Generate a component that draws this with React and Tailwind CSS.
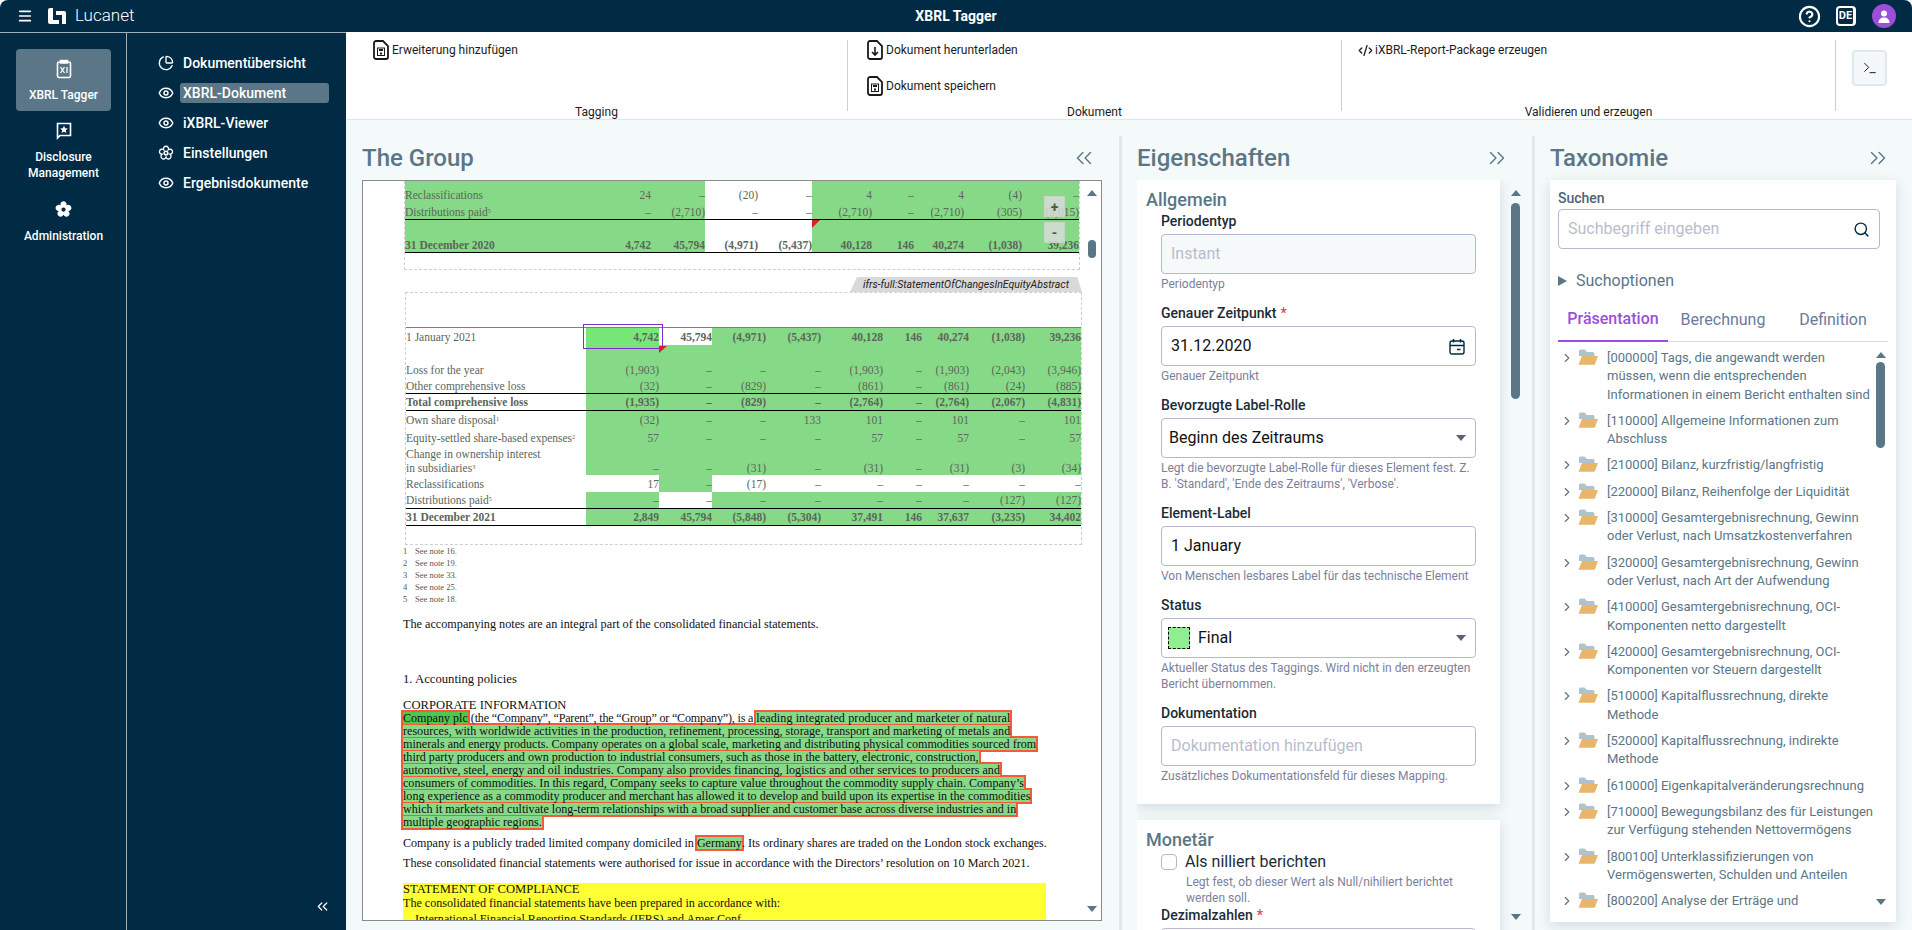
import React from 'react';
import { Menu, CircleHelp, Eye, ChevronsLeft, ChevronsRight, ChevronRight, Search, Terminal, CodeXml, ChartPie } from 'lucide-react';

const T1 = 'grid grid-cols-[190px_56px_54px_53px_54px_60px_42px_50px_58px_57px]';
const T2 = 'grid grid-cols-[180px_73px_53px_54px_55px_62px_39px_47px_56px_56px]';

const flower = 'M5.3 4.28A2.9 2.9 0 1 1 10.7 4.28A2.9 2.9 0 1 1 12.37 9.42A2.9 2.9 0 1 1 8 12.6A2.9 2.9 0 1 1 3.63 9.42A2.9 2.9 0 1 1 5.3 4.28Z';

const tree = [
  '[000000] Tags, die angewandt werden\nmüssen, wenn die entsprechenden\nInformationen in einem Bericht enthalten sind',
  '[110000] Allgemeine Informationen zum\nAbschluss',
  '[210000] Bilanz, kurzfristig/langfristig',
  '[220000] Bilanz, Reihenfolge der Liquidität',
  '[310000] Gesamtergebnisrechnung, Gewinn\noder Verlust, nach Umsatzkostenverfahren',
  '[320000] Gesamtergebnisrechnung, Gewinn\noder Verlust, nach Art der Aufwendung',
  '[410000] Gesamtergebnisrechnung, OCI-\nKomponenten netto dargestellt',
  '[420000] Gesamtergebnisrechnung, OCI-\nKomponenten vor Steuern dargestellt',
  '[510000] Kapitalflussrechnung, direkte\nMethode',
  '[520000] Kapitalflussrechnung, indirekte\nMethode',
  '[610000] Eigenkapitalveränderungsrechnung',
  '[710000] Bewegungsbilanz des für Leistungen\nzur Verfügung stehenden Nettovermögens',
  '[800100] Unterklassifizierungen von\nVermögenswerten, Schulden und Anteilen',
  '[800200] Analyse der Erträge und\nAufwendungen',
];

function Tri({ down, className = '' }) {
  return (
    <svg width="10" height="6" viewBox="0 0 10 6" className={className}>
      <path d={down ? 'M0 0h10L5 6z' : 'M5 0l5 6H0z'} fill="currentColor" />
    </svg>
  );
}

function FileBase({ children }) {
  return (
    <svg width="16" height="20" viewBox="0 0 16 20" fill="none" className="shrink-0">
      <path d="M3 1h7l5 5v11a2 2 0 0 1-2 2H3a2 2 0 0 1-2-2V3a2 2 0 0 1 2-2z" stroke="#1a1a1a" strokeWidth="1.8" />
      {children}
    </svg>
  );
}

function SaveFile() {
  return (
    <FileBase>
      <rect x="4.5" y="8" width="7" height="7.5" stroke="#1a1a1a" strokeWidth="1" />
      <rect x="6" y="9" width="4" height="2" fill="#1a1a1a" />
      <rect x="7" y="12.5" width="2" height="2" fill="#1a1a1a" />
    </FileBase>
  );
}

function DownloadFile() {
  return (
    <FileBase>
      <path d="M8 7v8M5 12l3 3 3-3" stroke="#1a1a1a" strokeWidth="1.6" />
    </FileBase>
  );
}

function Folder() {
  return (
    <svg width="20" height="16" viewBox="0 0 20 16" className="shrink-0">
      <path d="M1 2a1.500 1.500 0 0 1 1.500-1.500h4L9 3h6a1.500 1.500 0 0 1 1.500 1.500V7H1z" fill="#afc3cf" />
      <path d="M4 7h16l-3 8a1 1 0 0 1-1 .7H0.500z" fill="#e9b568" />
    </svg>
  );
}

function NavIcon({ kind }) {
  if (kind === 'pie') return <ChartPie size={16} strokeWidth={2} className="text-white" />;
  if (kind === 'eye') return <Eye size={16} strokeWidth={2.2} className="text-white" />;
  return (
    <svg width="16" height="16" viewBox="0 0 16 16" fill="none" stroke="white" strokeWidth="1.500">
      <path d={flower} transform="translate(8 8) scale(0.88) translate(-8 -8)" />
      <circle cx="8" cy="8" r="1.800" />
    </svg>
  );
}

function RailItem({ active, icon, children }) {
  return (
    <div className={`mx-4 w-[95px] flex flex-col items-center pt-[10px] pb-2 rounded ${active ? 'bg-[#5b7687]' : ''}`}>
      <div className="h-5 flex items-center justify-center">{icon}</div>
      <div className="mt-2 text-center text-xs leading-4 font-medium text-white">{children}</div>
    </div>
  );
}

function ToolItem({ icon, children }) {
  return (
    <div className="flex items-center h-5 gap-[3px] text-xs text-[#1c1c1c]">
      {icon}
      <span>{children}</span>
    </div>
  );
}

function Row({ grid, label, sup, vals, h, white = [], bold, boldLabel, light, labelGreen, end }) {
  return (
    <div className={`${grid} ${h} text-[11.5px] leading-[14px] text-[#5c665c]`}>
      <div className={`flex whitespace-pre-line overflow-hidden ${end ? 'items-end' : 'items-center'} ${labelGreen ? 'bg-[#86d986]' : ''} ${boldLabel ? 'font-bold' : ''}`}>
        <span>{label}{sup && <sup className="text-[6px]">{sup}</sup>}</span>
      </div>
      {(vals || Array(9).fill('')).map((v, i) => (
        <div
          key={i}
          className={`flex justify-end ${bold ? 'font-bold' : ''} ${end ? 'items-end' : 'items-center'} ${white.includes(i) ? '' : light === i ? 'bg-[#77e878]' : 'bg-[#86d986]'}`}
        >
          {v}
        </div>
      ))}
    </div>
  );
}

function Hl({ strong, children, className = '' }) {
  return (
    <span className={`relative inline-block ${className}`}>
      <span className="absolute -inset-[2px] bg-[#f4593a] z-[-2]" />
      <span className="absolute inset-0 bg-white z-[-1]" />
      <span className={`block h-[12px] leading-[12px] ${strong ? 'bg-[#4cc94c]' : 'bg-[#86d986]'}`}>{children}</span>
    </span>
  );
}

function Help({ children }) {
  return <div className="mt-[2px] text-xs leading-4 text-[#7c7f9c]">{children}</div>;
}

function Label({ req, children }) {
  return (
    <div className="h-5 leading-5 text-sm font-medium text-[#1d2b36]">
      {children}
      {req && <span className="ml-1 text-[#e0445a]">*</span>}
    </div>
  );
}

function Field({ label, req, help, children, bg = 'bg-white' }) {
  return (
    <div className="mb-[11px]">
      <Label req={req}>{label}</Label>
      <div className={`mt-[3px] h-10 rounded border border-[#b5b9cc] ${bg} flex items-center justify-between text-base`}>
        {children}
      </div>
      <Help>{help}</Help>
    </div>
  );
}

function ScrollCol({ className, thumb }) {
  return (
    <div className={`flex flex-col items-center text-[#5b7687] ${className}`}>
      <Tri className="shrink-0" />
      {thumb}
      <div className="mt-auto">
        <Tri down />
      </div>
    </div>
  );
}

export default function App() {
  return (
    <div className="w-[1912px] h-[930px] overflow-hidden flex flex-col bg-[#f4f9fa] font-['Roboto',sans-serif]">
      {/* Header */}
      <header className="h-8 shrink-0 bg-[#012b44] rounded-t-lg flex items-center relative text-white">
        <Menu size={16} strokeWidth={2.500} className="ml-[17px]" />
        <svg width="18" height="16" viewBox="0 0 18 16" className="ml-[15px]">
          <path d="M0 2a2 2 0 0 1 2-2h3v12h6v4H2a2 2 0 0 1-2-2z" fill="white" />
          <path d="M8 3h8a2 2 0 0 1 2 2v11h-4V7H8z" fill="white" />
        </svg>
        <span className="ml-[9px] text-[17px] font-light">Lucanet</span>
        <span className="absolute left-[912px] w-[88px] text-center text-sm font-bold">XBRL Tagger</span>
        <div className="ml-auto flex items-center mr-4">
          <CircleHelp size={23} strokeWidth={2.200} />
          <div className="ml-[15px] w-5 h-5 border-2 border-r-[3px] border-white rounded-sm text-[11px] font-bold flex items-center justify-center">DE</div>
          <div className="ml-4 w-6 h-6 rounded-full bg-[#9b4fd8] flex items-center justify-center">
            <svg width="12" height="13" viewBox="0 0 12 13" fill="white">
              <circle cx="6" cy="3.500" r="3" />
              <path d="M0.500 13c0-3.500 2.200-5.500 5.500-5.500s5.500 2 5.500 5.500z" />
            </svg>
          </div>
        </div>
      </header>

      <div className="flex flex-1 min-h-0">
        {/* Rail */}
        <aside className="w-[127px] shrink-0 bg-[#012b44] border-t border-r border-[#9fb1bd] pt-4">
          <RailItem
            active
            icon={
              <svg width="16" height="20" viewBox="0 0 16 20" fill="none" stroke="white" strokeWidth="1.600">
                <rect x="1.500" y="3" width="13" height="15.500" rx="1.500" />
                <path d="M4.500 1.500h7V4h-7z" fill="white" />
                <path d="M4.500 8l4 6M8.500 8l-4 6M11 8v6" strokeWidth="1.300" />
              </svg>
            }
          >
            XBRL Tagger
          </RailItem>
          <RailItem
            icon={
              <svg width="16" height="18" viewBox="0 0 16 18" fill="none" stroke="white" strokeWidth="1.600">
                <path d="M1.500 1.500h13v12H4l-2.500 2.500z" />
                <path d="M8 3.800l1.200 2.400 2.600.3-1.900 1.800.5 2.600L8 9.700l-2.400 1.200.5-2.600-1.900-1.800 2.600-.3z" fill="white" stroke="none" />
              </svg>
            }
          >
            Disclosure
            <br />
            Management
          </RailItem>
          <RailItem
            icon={
              <svg width="17" height="17" viewBox="0 0 16 16" fill="white" fillRule="evenodd">
                <path d={`${flower}M8 6a2 2 0 1 0 0 4 2 2 0 0 0 0-4z`} />
              </svg>
            }
          >
            <span className="block pt-px">Administration</span>
          </RailItem>
        </aside>

        {/* Second nav */}
        <nav className="w-[219px] shrink-0 bg-[#012b44] border-t border-[#9fb1bd] pt-[15px] flex flex-col text-white text-sm font-medium">
          {[
            ['pie', 'Dokumentübersicht'],
            ['eye', 'XBRL-Dokument', true],
            ['eye', 'iXBRL-Viewer'],
            ['gear', 'Einstellungen'],
            ['eye', 'Ergebnisdokumente'],
          ].map(([kind, text, active]) => (
            <div key={text} className="h-[30px] flex items-center pl-[31px]">
              <NavIcon kind={kind} />
              <span className={`ml-[6px] w-[149px] h-5 leading-5 pl-[3px] rounded-[3px] ${active ? 'bg-[#5b7687]' : ''}`}>{text}</span>
            </div>
          ))}
          <div className="mt-auto mb-[15px] ml-[187px]">
            <ChevronsLeft size={17} strokeWidth={1.700} />
          </div>
        </nav>

        {/* Main */}
        <main className="flex-1 min-w-0 flex flex-col">
          <div className="h-[88px] shrink-0 bg-white border-b border-[#dde6ea] flex">
            <div className="w-[501px] flex flex-col pt-2 pl-[27px]">
              <ToolItem icon={<SaveFile />}>Erweiterung hinzufügen</ToolItem>
              <div className="mt-auto -mb-px -ml-[27px] h-[15px] leading-[15px] text-center text-xs text-[#1c1c1c]">Tagging</div>
            </div>
            <div className="w-px h-[71px] mt-2 bg-[#c9cfd3]" />
            <div className="w-[493px] flex flex-col pt-2 pl-[19px]">
              <ToolItem icon={<DownloadFile />}>Dokument herunterladen</ToolItem>
              <div className="mt-4">
                <ToolItem icon={<SaveFile />}>Dokument speichern</ToolItem>
              </div>
              <div className="mt-auto -mb-px -ml-[19px] h-[15px] leading-[15px] text-center text-xs text-[#1c1c1c]">Dokument</div>
            </div>
            <div className="w-px h-[71px] mt-2 bg-[#c9cfd3]" />
            <div className="w-[493px] flex flex-col pt-2 pl-4">
              <div className="flex items-center h-5 gap-[2px] text-xs text-[#1c1c1c]">
                <CodeXml size={15} strokeWidth={2} />
                <span>iXBRL-Report-Package erzeugen</span>
              </div>
              <div className="mt-auto -mb-px -ml-4 h-[15px] leading-[15px] text-center text-xs text-[#1c1c1c]">Validieren und erzeugen</div>
            </div>
            <div className="w-px h-[71px] mt-2 bg-[#c9cfd3]" />
            <div className="ml-4 mt-[18px] w-[35px] h-9 rounded border-2 border-[#dfe8ec] bg-[#f5f8fa] flex items-center justify-center">
              <Terminal size={16} strokeWidth={1.500} className="text-[#1c1c1c]" />
            </div>
          </div>

          <div className="flex-1 min-h-0 flex bg-[#f4f9fa]">
            {/* Document pane */}
            <section className="w-[773px] shrink-0 pt-4 pl-4 flex flex-col">
              <div className="h-11 w-[740px] flex items-center justify-between pr-[5px]">
                <h2 className="text-2xl font-medium text-[#5b7687]">The Group</h2>
                <ChevronsLeft size={26} strokeWidth={1.300} className="text-[#5b7687]" />
              </div>
              <div className="w-[740px] h-[741px] bg-white border border-[#8a8a8a] flex overflow-hidden">
                <div className="w-[720px] shrink-0 overflow-hidden pl-10 font-['Liberation_Serif',serif] isolate">
                  {/* first table */}
                  <div className="relative ml-px w-[676px] border-x border-b border-dashed border-[#cfcfcf] h-[89px]">
                    <Row grid={T1} labelGreen white={[2, 3]} h="h-[21px]" end label="Reclassifications" vals={['24', '–', '(20)', '–', '4', '–', '4', '(4)', '–']} />
                    <Row grid={T1} labelGreen end white={[2, 3]} h="h-[17px]" label="Distributions paid" sup="5" vals={['–', '(2,710)', '–', '–', '(2,710)', '–', '(2,710)', '(305)', '(3,015)']} />
                    <div className="h-px bg-black" />
                    <Row grid={T1} labelGreen bold boldLabel white={[2, 3]} h="h-8" end label="31 December 2020" vals={['4,742', '45,794', '(4,971)', '(5,437)', '40,128', '146', '40,274', '(1,038)', '39,236']} />
                    <div className="h-px bg-black" />
                    <div className="absolute left-[407px] top-[39px] w-2 h-2 bg-[#e0193c] [clip-path:polygon(0_0,100%_0,0_100%)]" />
                    <div className="absolute left-[639px] top-[15px] w-[21px] h-[21px] bg-[#dcdcdc]/80 border border-[#c9d4c9] flex items-center justify-center font-['Roboto',sans-serif] font-bold text-sm text-[#555]">+</div>
                    <div className="absolute left-[639px] top-[41px] w-[21px] h-[21px] bg-[#dcdcdc]/80 border border-[#c9d4c9] flex items-center justify-center font-['Roboto',sans-serif] font-bold text-sm text-[#555]">-</div>
                  </div>

                  {/* tag label */}
                  <div className="mt-[7px] w-[679px] flex justify-end">
                    <div className="w-[232px] h-[15px] bg-[#d9d9d9] [clip-path:polygon(3%_0,98%_0,100%_100%,0_100%)] flex items-center justify-center font-['Roboto',sans-serif] italic text-[10.5px] text-[#222]">
                      ifrs-full:StatementOfChangesInEquityAbstract
                    </div>
                  </div>

                  {/* second table */}
                  <div className="relative ml-[2px] w-[677px] h-[253px] border border-dashed border-[#cfcfcf] pt-[34px]">
                    <div className="h-px bg-[#2aa3a8]" />
                    <Row grid={T2} bold light={0} white={[1]} h="h-[17px]" label="1 January 2021" vals={['4,742', '45,794', '(4,971)', '(5,437)', '40,128', '146', '40,274', '(1,038)', '39,236']} />
                    <Row grid={T2} h="h-[17px]" label="" />
                    <Row grid={T2} h="h-4" label="Loss for the year" vals={['(1,903)', '–', '–', '–', '(1,903)', '–', '(1,903)', '(2,043)', '(3,946)']} />
                    <Row grid={T2} h="h-[15px]" label="Other comprehensive loss" vals={['(32)', '–', '(829)', '–', '(861)', '–', '(861)', '(24)', '(885)']} />
                    <div className="h-px bg-black" />
                    <Row grid={T2} bold boldLabel h="h-4" label="Total comprehensive loss" vals={['(1,935)', '–', '(829)', '–', '(2,764)', '–', '(2,764)', '(2,067)', '(4,831)']} />
                    <div className="h-px bg-black" />
                    <Row grid={T2} h="h-[18px]" label="Own share disposal" sup="1" vals={['(32)', '–', '–', '133', '101', '–', '101', '–', '101']} />
                    <Row grid={T2} h="h-[17px]" label="Equity-settled share-based expenses" sup="2" vals={['57', '–', '–', '–', '57', '–', '57', '–', '57']} />
                    <Row grid={T2} end h="h-[29px]" label={'Change in ownership interest\nin subsidiaries'} sup="3" vals={['–', '–', '(31)', '–', '(31)', '–', '(31)', '(3)', '(34)']} />
                    <Row grid={T2} white={[0, 2, 3, 4, 5, 6, 7, 8]} h="h-[17px]" label="Reclassifications" vals={['17', '–', '(17)', '–', '–', '–', '–', '–', '–']} />
                    <Row grid={T2} white={[1]} h="h-4" label="Distributions paid" sup="5" vals={['–', '–', '–', '–', '–', '–', '–', '(127)', '(127)']} />
                    <div className="h-px bg-black" />
                    <Row grid={T2} bold boldLabel h="h-4" label="31 December 2021" vals={['2,849', '45,794', '(5,848)', '(5,304)', '37,491', '146', '37,637', '(3,235)', '34,402']} />
                    <div className="h-px bg-black" />
                    <div className="absolute left-[177px] top-[31px] w-20 h-[25px] border border-[#7a2fd0]" />
                    <div className="absolute left-[253px] top-[53px] w-2 h-[7px] bg-[#e0193c] [clip-path:polygon(0_0,100%_0,0_100%)]" />
                  </div>

                  {/* footnotes */}
                  <div className="text-[8.5px] leading-3 text-[#555]">
                    {[16, 19, 33, 25, 18].map((n, i) => (
                      <div key={n} className="flex">
                        <span className="w-3">{i + 1}</span>
                        <span>See note {n}.</span>
                      </div>
                    ))}
                  </div>

                  <div className="text-[12.100px] text-[#111] w-[680px]">
                    <p className="mt-3 h-[14px] leading-[14px] text-[12.200px]">The accompanying notes are an integral part of the consolidated financial statements.</p>
                    <p className="mt-10 h-4 leading-4 text-[12.700px]">1. Accounting policies</p>
                    <p className="mt-[11px] h-[14px] leading-[14px] text-[12.600px]">CORPORATE INFORMATION</p>
                    <div className="relative z-0 leading-[13px] whitespace-nowrap">
                      <div className="h-[13px]">
                        <Hl strong>Company plc</Hl> <span className="tracking-[-0.19px]">(the “Company”, “Parent”, the “Group” or “Company”), is a</span> <Hl className="tracking-[0.1px]">leading integrated producer and marketer of natural</Hl>
                      </div>
                      <div className="h-[13px]"><Hl>resources, with worldwide activities in the production, refinement, processing, storage, transport and marketing of metals and</Hl></div>
                      <div className="h-[13px]"><Hl>minerals and energy products. Company operates on a global scale, marketing and distributing physical commodities sourced from</Hl></div>
                      <div className="h-[13px]"><Hl>third party producers and own production to industrial consumers, such as those in the battery, electronic, construction,</Hl></div>
                      <div className="h-[13px]"><Hl>automotive, steel, energy and oil industries. Company also provides financing, logistics and other services to producers and</Hl></div>
                      <div className="h-[13px]"><Hl>consumers of commodities. In this regard, Company seeks to capture value throughout the commodity supply chain. Company’s</Hl></div>
                      <div className="h-[13px]"><Hl>long experience as a commodity producer and merchant has allowed it to develop and build upon its expertise in the commodities</Hl></div>
                      <div className="h-[13px]"><Hl>which it markets and cultivate long-term relationships with a broad supplier and customer base across diverse industries and in</Hl></div>
                      <div className="h-[13px]"><Hl>multiple geographic regions.</Hl></div>
                    </div>
                    <p className="relative z-0 mt-[7px] h-[14px] leading-[14px] whitespace-nowrap">
                      Company is a publicly traded limited company domiciled in <Hl>Germany</Hl>. Its ordinary shares are traded on the London stock exchanges.
                    </p>
                    <p className="mt-[6px] h-[14px] leading-[14px] whitespace-nowrap">These consolidated financial statements were authorised for issue in accordance with the Directors’ resolution on 10 March 2021.</p>
                    <div className="mt-[13px] w-[643px] bg-[#ffff33]">
                      <p className="h-[13px] leading-[13px] text-[12.600px]">STATEMENT OF COMPLIANCE</p>
                      <p className="h-[14px] leading-[14px]">The consolidated financial statements have been prepared in accordance with:</p>
                      <p className="mt-[2px] pl-3 h-[14px] leading-[14px]">International Financial Reporting Standards (IFRS) and Amer Conf</p>
                    </div>
                  </div>
                </div>
                <ScrollCol
                  className="w-[19px] pt-[9px] pb-2 ml-[-1px]"
                  thumb={<div className="mt-[44px] w-2 h-[18px] rounded-full bg-[#5b7687]" />}
                />
              </div>
            </section>

            {/* Properties pane */}
            <section className="w-[413px] shrink-0 mt-4 border-l-[3px] border-[#dfe9ed] pl-[15px] flex flex-col">
              <div className="h-11 w-[378px] shrink-0 flex items-center justify-between">
                <h2 className="text-2xl font-medium text-[#5b7687]">Eigenschaften</h2>
                <ChevronsRight size={26} strokeWidth={1.300} className="mr-[5px] text-[#5b7687]" />
              </div>
              <div className="flex flex-1 min-h-0 overflow-hidden">
                <div className="w-[363px] shrink-0">
                  <div className="bg-white shadow-[0_4px_12px_rgba(0,60,90,0.14)] pt-2 pb-[9px] pl-[9px]">
                    <h3 className="h-[23px] leading-6 text-lg font-medium text-[#5b7687]">Allgemein</h3>
                    <div className="pl-[15px] w-[330px]">
                      <Field label="Periodentyp" help="Periodentyp" bg="bg-[#f5f9fa]">
                        <span className="pl-[9px] text-[#b9bdce]">Instant</span>
                      </Field>
                      <Field label="Genauer Zeitpunkt" req help="Genauer Zeitpunkt">
                        <span className="pl-[9px] text-[#111]">31.12.2020</span>
                        <svg width="16" height="17" viewBox="0 0 16 17" fill="none" stroke="#012b44" strokeWidth="1.400" className="mr-[10px]">
                          <rect x="1" y="3" width="14" height="13" rx="2" />
                          <path d="M1 7.500h14M4.500 1v3.500M11.500 1v3.500M8 11.500h3.500" />
                        </svg>
                      </Field>
                      <Field
                        label="Bevorzugte Label-Rolle"
                        help="Legt die bevorzugte Label-Rolle für dieses Element fest. Z. B. 'Standard', 'Ende des Zeitraums', 'Verbose'."
                      >
                        <span className="pl-[7px] text-[#111]">Beginn des Zeitraums</span>
                        <Tri down className="mr-[9px] text-[#5b5f82]" />
                      </Field>
                      <Field label="Element-Label" help="Von Menschen lesbares Label für das technische Element">
                        <span className="pl-[9px] text-[#111]">1 January</span>
                      </Field>
                      <Field label="Status" help="Aktueller Status des Taggings. Wird nicht in den erzeugten Bericht übernommen.">
                        <span className="pl-[6px] flex items-center gap-2 text-[#111]">
                          <span className="w-[22px] h-[22px] bg-[#90ee90] border border-dashed border-black" />
                          Final
                        </span>
                        <Tri down className="mr-[9px] text-[#5b5f82]" />
                      </Field>
                      <Field label="Dokumentation" help="Zusätzliches Dokumentationsfeld für dieses Mapping.">
                        <span className="pl-[9px] text-[#b9bdce]">Dokumentation hinzufügen</span>
                      </Field>
                    </div>
                  </div>
                  <div className="mt-4 bg-white shadow-[0_4px_12px_rgba(0,60,90,0.14)] pt-2 pl-[9px] pb-4">
                    <h3 className="h-[22px] leading-6 text-lg font-medium text-[#5b7687]">Monetär</h3>
                    <div className="pl-[15px] w-[330px]">
                      <div className="flex items-center h-6 gap-2 text-base text-[#1d2b36]">
                        <span className="w-4 h-4 rounded-sm border border-[#b5b9cc]" />
                        Als nilliert berichten
                      </div>
                      <div className="pl-[25px] text-xs leading-4 text-[#7c7f9c]">Legt fest, ob dieser Wert als Null/nihiliert berichtet werden soll.</div>
                      <div className="-mt-px">
                        <Label req>Dezimalzahlen</Label>
                      </div>
                      <div className="mt-[3px] h-10 rounded border border-[#b5b9cc]" />
                    </div>
                  </div>
                </div>
                <ScrollCol
                  className="w-[9px] ml-[11px] pt-[10px] pb-[10px]"
                  thumb={<div className="mt-[7px] w-[9px] h-[196px] rounded-full bg-[#5b7687]" />}
                />
              </div>
            </section>

            {/* Taxonomy pane */}
            <section className="flex-1 min-w-0 mt-4 border-l-[3px] border-[#dfe9ed] pl-[15px] flex flex-col">
              <div className="h-11 w-[346px] shrink-0 flex items-center justify-between">
                <h2 className="text-2xl font-medium text-[#5b7687]">Taxonomie</h2>
                <ChevronsRight size={26} strokeWidth={1.300} className="mr-[5px] text-[#5b7687]" />
              </div>
              <div className="w-[346px] h-[742px] bg-white shadow-[0_4px_12px_rgba(0,60,90,0.14)] pt-2 pl-2 flex flex-col">
                <div className="h-5 leading-5 text-sm font-medium text-[#4f6472]">Suchen</div>
                <div className="mt-px w-[322px] h-10 rounded border border-[#b5b9cc] flex items-center justify-between pl-[9px] pr-[9px] text-base text-[#b9bdce]">
                  <span>Suchbegriff eingeben</span>
                  <Search size={17} strokeWidth={2} className="text-[#012b44]" />
                </div>
                <div className="mt-5 h-6 flex items-center gap-[9px] text-base text-[#5b7687]">
                  <svg width="9" height="10" viewBox="0 0 9 10"><path d="M0 0l9 5-9 5z" fill="#5b7687" /></svg>
                  Suchoptionen
                </div>
                <div className="mt-[5px] w-[330px] h-11 border-b border-[#d8dbe5] flex text-base font-medium shrink-0">
                  <div className="w-[110px] h-11 border-b-2 border-[#9b4fd8] text-[#9b4fd8] flex items-center justify-center">Präsentation</div>
                  <div className="w-[110px] h-11 text-[#6b7a9a] font-normal flex items-center justify-center">Berechnung</div>
                  <div className="w-[110px] h-11 text-[#6b7a9a] font-normal flex items-center justify-center">Definition</div>
                </div>
                <div className="flex h-[573px] w-[327px]">
                  <div className="w-[318px] h-[566px] shrink-0 overflow-hidden pt-[3px]">
                    {tree.map((t) => (
                      <div key={t} className="flex pl-1 py-1 text-[13px] leading-[18.300px] text-[#5b7687]">
                        <ChevronRight size={14} strokeWidth={2} className="shrink-0 -ml-[2px] mt-[2px] text-[#5b7687]" />
                        <div className="ml-1 shrink-0"><Folder /></div>
                        <div className="ml-[9px] whitespace-pre">{t}</div>
                      </div>
                    ))}
                  </div>
                  <ScrollCol
                    className="w-[9px] pt-[10px] pb-[10px]"
                    thumb={<div className="mt-1 w-[9px] h-[86px] rounded-full bg-[#5b7687]" />}
                  />
                </div>
              </div>
            </section>
          </div>
        </main>
      </div>
    </div>
  );
}
